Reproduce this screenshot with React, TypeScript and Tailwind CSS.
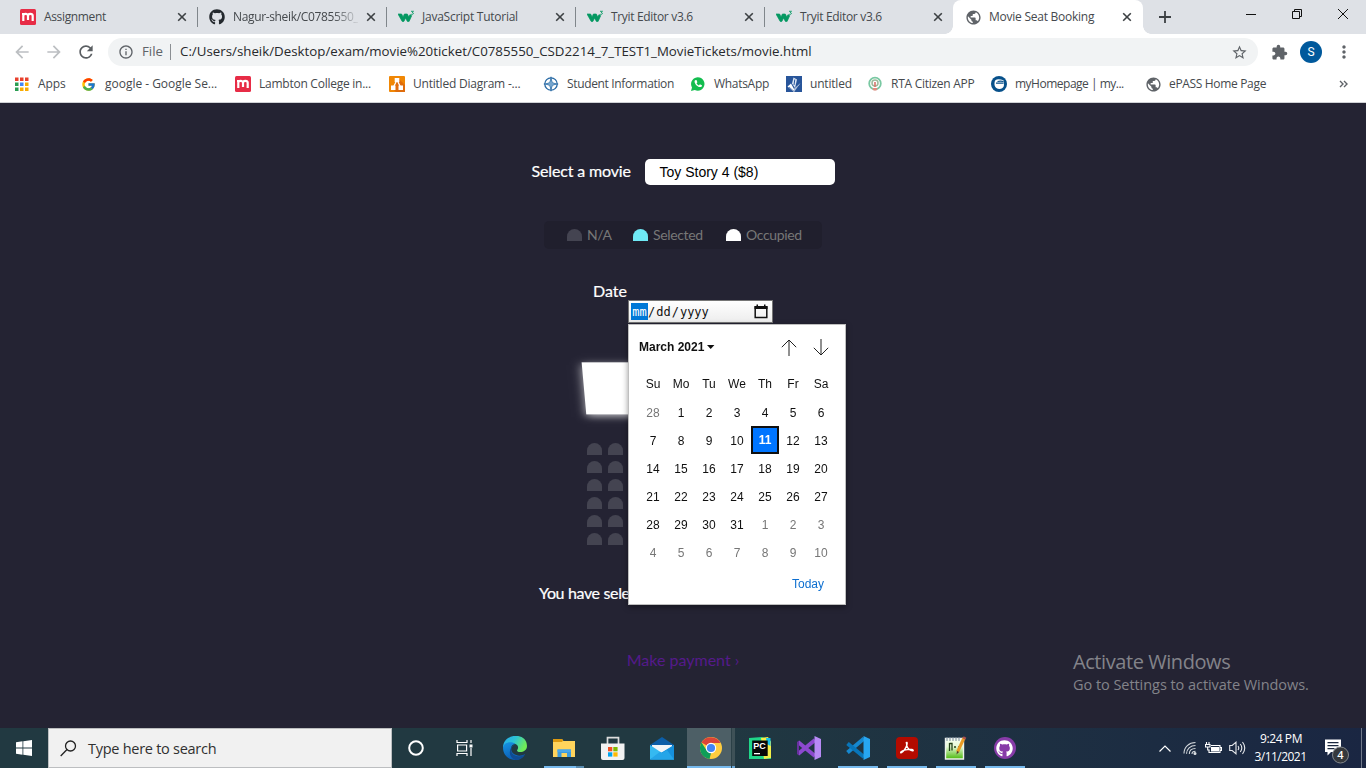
import React from "react";
import { FaGithub } from "react-icons/fa";
import { FcGoogle } from "react-icons/fc";
import { MdExtension, MdRefresh, MdPublic, MdStarBorder, MdArrowBack, MdArrowForward, MdMoreVert, MdInfoOutline } from "react-icons/md";

const ui = "font-['Open_Sans','Noto_Sans',sans-serif]";

function Moodle() {
  return (
    <svg width="16" height="16" viewBox="0 0 16 16" className="shrink-0">
      <rect width="16" height="16" rx="1.5" fill="#e72c46" />
      <path d="M3.3 12V6.5C3.3 4.6 8 4.2 8 6.700V11M8 6.700C8 4.300 12.700 4.300 12.700 6.700V12" fill="none" stroke="#fff" strokeWidth="2.200" />
      <path d="M2 4h5v2H2z" fill="#fff" />
    </svg>
  );
}

function W3() {
  return (
    <svg width="17" height="16" viewBox="0 0 17 16" className="shrink-0">
      <path d="M0 5h3.6l1.500 3L6.400 5h2.900l1.500 3L12 5.600l1.700 1.100-2.600 5.700H9.400L7.500 9l-1.600 3.400H4.200z" fill="#059862" stroke="#059862" strokeWidth=".7" />
      <path d="M13 2.300h2.500l-1.300 1.300c1.900 0 1.700 2.200-1 1.700" fill="none" stroke="#059862" strokeWidth=".9" />
    </svg>
  );
}

function Close() {
  return (
    <svg width="10" height="10" viewBox="0 0 10 10" className="shrink-0">
      <path d="M1.2 1.2l7.6 7.6M8.8 1.2L1.2 8.8" stroke="#3c4043" strokeWidth="1.6" />
    </svg>
  );
}

const tabs = [
  { icon: <Moodle />, title: "Assignment", cls: "tracking-[-0.35px]" },
  { icon: <FaGithub size={16} color="#24292e" className="shrink-0" />, title: "Nagur-sheik/C0785550_", cls: "tracking-[-0.35px] [mask-image:linear-gradient(to_right,#000_100px,transparent_128px)]" },
  { icon: <W3 />, title: "JavaScript Tutorial", cls: "tracking-[-0.25px]" },
  { icon: <W3 />, title: "Tryit Editor v3.6", cls: "tracking-[-0.33px]" },
  { icon: <W3 />, title: "Tryit Editor v3.6", cls: "tracking-[-0.33px]" },
];

function TabStrip() {
  return (
    <div className="flex h-[34px] bg-[#dee1e6] pl-2 text-[12px] text-[#45494d]">
      {tabs.map((t, i) => (
        <div key={i} className="flex w-[189px] shrink-0 items-center pl-3">
          <span className="flex w-6 shrink-0">{t.icon}</span>
          <span className={`w-[125px] whitespace-nowrap ${t.cls}`}>{t.title}</span>
          <span className="ml-2"><Close /></span>
          <span className={i < 4 ? "-mr-px ml-auto h-5 w-px bg-[#80868b]" : "hidden"} />
        </div>
      ))}
      <div className="relative flex w-[190px] shrink-0 items-center rounded-t-lg bg-white pl-3">
        <span className="absolute -left-2 bottom-0 h-2 w-2 bg-[radial-gradient(circle_at_0_0,transparent_7.5px,white_8px)]" />
        <span className="absolute -right-2 bottom-0 h-2 w-2 bg-[radial-gradient(circle_at_100%_0,transparent_7.5px,white_8px)]" />
        <span className="flex w-6 shrink-0"><MdPublic size={17} color="#5f6368" /></span>
        <span className="w-[125px] whitespace-nowrap tracking-[-0.25px]">Movie Seat Booking</span>
        <span className="ml-2"><Close /></span>
      </div>
      <div className="flex w-11 items-center justify-center">
        <svg width="12" height="12" viewBox="0 0 12 12"><path d="M6 0v12M0 6h12" stroke="#3c4043" strokeWidth="1.8" /></svg>
      </div>
      <div className="ml-auto flex h-[28px] items-center">
        <span className="flex w-[46px] justify-center"><svg width="10" height="10"><path d="M0 5.5h10" stroke="#111" /></svg></span>
        <span className="flex w-[46px] justify-center"><svg width="10" height="10"><path d="M.5 2.5h7v7h-7zM2.5 2.5v-2h7v7h-2" stroke="#111" fill="none" /></svg></span>
        <span className="flex w-[46px] justify-center"><svg width="10" height="10"><path d="M0 0l10 10M10 0L0 10" stroke="#111" /></svg></span>
      </div>
    </div>
  );
}

function Toolbar() {
  return (
    <div className="flex h-9 items-center bg-white pl-3">
      <MdArrowBack size={20} color="#bcbfc2" className="mr-3" />
      <MdArrowForward size={20} color="#bcbfc2" className="mr-3" />
      <MdRefresh size={20} color="#5a5e62" className="mr-3" />
      <div className="flex h-7 w-[1150px] items-center rounded-full bg-[#f1f3f4] pl-2.5 pr-2.5">
        <MdInfoOutline size={16} color="#5f6368" className="mr-2" />
        <span className="w-[28px] text-[13.3px] text-[#5f6368]">File</span>
        <span className="mr-[9px] h-4 w-px bg-[#8b8f93]" />
        <span className="whitespace-nowrap text-[13.3px] text-[#27292c]">C:/Users/sheik/Desktop/exam/movie%20ticket/C0785550_CSD2214_7_TEST1_MovieTickets/movie.html</span>
        <MdStarBorder size={17} color="#5f6368" className="ml-auto" />
      </div>
      <MdExtension size={17} color="#5f6368" className="ml-[13px]" />
      <span className="ml-[12px] flex h-[22px] w-[22px] items-center justify-center rounded-full bg-[#00599c] font-['Roboto',sans-serif] text-[12px] text-white">S</span>
      <MdMoreVert size={20} color="#5f6368" className="ml-[12px]" />
    </div>
  );
}

const appColors = ["#e8402c", "#e8402c", "#e8402c", "#2a9d52", "#4286f5", "#f9ab00", "#2a9d52", "#f9ab00", "#f9ab00"];

const bookmarks = [
  { w: "w-[67px]", t: "Apps", c: "tracking-[-0.1px]", icon: <svg width="15" height="14">{appColors.map((c, i) => <rect key={i} x={1 + (i % 3) * 5} y={0.5 + Math.floor(i / 3) * 5} width="3.500" height="3.500" fill={c} />)}</svg> },
  { w: "w-[154px]", t: "google - Google Se...", c: "tracking-[-0.02px]", icon: <FcGoogle size={15} /> },
  { w: "w-[154px]", t: "Lambton College in...", c: "tracking-[-0.25px]", icon: <Moodle /> },
  { w: "w-[154px]", t: "Untitled Diagram -...", c: "tracking-[-0.22px]", icon: <svg width="16" height="16" viewBox="0 0 16 16"><rect width="16" height="16" rx="1" fill="#f08705" /><path d="M10 3l6 6v7H7l-4-4z" fill="#df6c0c" /><path d="M8 4L4.5 11M8 4l3.5 7" stroke="#fff" strokeWidth="1.3" /><path d="M5.7 2h4.6v4H5.7zM2 9.5h4.5V14H2zM9.5 9.5H14V14H9.5z" fill="#fff" /></svg> },
  { w: "w-[147px]", t: "Student Information", c: "tracking-[-0.35px]", icon: <svg width="16" height="16" viewBox="0 0 16 16" fill="none"><circle cx="8" cy="8" r="6.2" stroke="#2769a4" strokeWidth="1.3" /><path d="M8 .8v14.4M.8 8h14.4" stroke="#2769a4" strokeWidth="1.1" /><path d="M8 3l1.5 3.5L13 8 9.5 9.5 8 13 6.5 9.5 3 8l3.5-1.5z" fill="#75a5ce" stroke="#2769a4" strokeWidth=".6" /></svg> },
  { w: "w-[96px]", t: "WhatsApp", c: "tracking-[-0.3px]", icon: <svg width="16" height="16" viewBox="0 0 16 16"><path d="M1 15l1-3.6A6.7 6.7 0 1 1 4.8 14z" fill="#13bd4f" /><path d="M5 4.2c-1.700 2 2 6.800 5 6.900 1.800 0 2.500-1.500 1.800-1.900L9.900 8.300 8.900 9.400C7.900 9.100 6.900 8.200 6.600 7.200l.8-1L6.500 4z" fill="#fff" /></svg> },
  { w: "w-[81px]", t: "untitled", c: "tracking-[-0.2px]", icon: <svg width="16" height="16" viewBox="0 0 16 16"><rect width="16" height="16" fill="#28559a" /><path d="M1.500 10.500L5 7.500l3 5.500 6.500-6-6.500 9z" fill="#fff" /><path d="M7.500 1.500l3.500 2L9 12 6 7.500z" fill="#dce6f4" /><path d="M8.800 3.500L8 9" stroke="#28559a" /><path d="M3 11l4.500 4L13 9.500" stroke="#28559a" fill="none" strokeWidth=".7" /></svg> },
  { w: "w-[124px]", t: "RTA Citizen APP", c: "tracking-[-0.27px]", icon: <svg width="16" height="16" viewBox="0 0 16 16" fill="none"><circle cx="8" cy="7.5" r="5.8" stroke="#79c8a2" strokeWidth="1.8" /><circle cx="8" cy="7" r="3" stroke="#9db99b" strokeWidth="1.5" /><path d="M8 6v5" stroke="#d9746b" strokeWidth="1.6" /><path d="M5.5 12h5l-1 2.5h-3z" fill="#e58a80" /></svg> },
  { w: "w-[154px]", t: "myHomepage | my...", c: "tracking-[-0.5px]", icon: <svg width="16" height="16" viewBox="0 0 16 16"><circle cx="8" cy="8" r="8" fill="#07508a" /><path d="M3.500 7C3.500 2.500 8 2.800 12.500 4.300L13 9c-.2 5-8.500 5.500-9.500 0z" fill="#fff" /><path d="M5 7.200h7.500M6.500 5.500q3-.8 6 0" stroke="#07508a" strokeWidth="1.200" fill="none" /></svg> },
  { w: "w-[150px]", t: "ePASS Home Page", c: "tracking-[-0.33px]", icon: <MdPublic size={17} color="#5f6368" /> },
];

function Bookmarks() {
  return (
    <div className="flex h-[33px] items-center border-b border-[#cfd1d5] bg-white pb-[4px] pl-[14px] text-[12px] text-[#45494d]">
      {bookmarks.map((b) => (
        <div key={b.t} className={`flex shrink-0 items-center ${b.w}`}>
          <span className="flex w-6 shrink-0">{b.icon}</span>
          <span className={`whitespace-nowrap ${b.c}`}>{b.t}</span>
        </div>
      ))}
      <svg width="9" height="8" viewBox="0 0 9 8" className="ml-auto mr-[18px]"><path d="M1 1l3 3-3 3M5 1l3 3-3 3" fill="none" stroke="#5f6368" strokeWidth="1.4" /></svg>
    </div>
  );
}

const weeks = [
  [28, 1, 2, 3, 4, 5, 6],
  [7, 8, 9, 10, 11, 12, 13],
  [14, 15, 16, 17, 18, 19, 20],
  [21, 22, 23, 24, 25, 26, 27],
  [28, 29, 30, 31, 1, 2, 3],
  [4, 5, 6, 7, 8, 9, 10],
];

function Calendar() {
  return (
    <div className="absolute left-[628px] top-[221px] flex h-[281px] w-[218px] flex-col border border-[#bfbfbf] bg-white px-[10px] font-['Liberation_Sans',Arial,sans-serif] text-[12px] text-[#101010] shadow-[0_2px_6px_rgba(0,0,0,0.4)]">
      <div className="flex h-[44px] items-center">
        <span className="font-bold">March 2021</span>
        <svg width="8" height="5" className="ml-[3px]"><path d="M0 0h7.4L3.7 4z" fill="#101010" /></svg>
        <svg width="16" height="17" viewBox="0 0 16 17" className="ml-auto mr-4 mt-px" fill="none" stroke="#222"><path d="M8 1v16M.8 8.2L8 1l7.2 7.2" /></svg>
        <svg width="16" height="17" viewBox="0 0 16 17" className="mr-[6px] mt-px" fill="none" stroke="#222"><path d="M8 0v16M.8 8.8L8 16l7.2-7.2" /></svg>
      </div>
      <div className="grid h-[29px] grid-cols-7">
        {["Su", "Mo", "Tu", "We", "Th", "Fr", "Sa"].map((d) => (
          <span key={d} className="flex items-center justify-center">{d}</span>
        ))}
      </div>
      <div className="grid grid-cols-7">
        {weeks.flatMap((w, r) =>
          w.map((d, c) => {
            const muted = (r === 0 && c === 0) || r === 5 || (r === 4 && c > 3);
            const today = r === 1 && c === 4;
            return (
              <span
                key={`${r}-${c}`}
                className={`flex h-7 items-center justify-center ${today ? "border-2 border-[#101010] bg-[#0075ff] font-bold text-white" : muted ? "pt-px text-[#767676]" : "pt-px"}`}
              >
                {d}
              </span>
            );
          }),
        )}
      </div>
      <div className="flex justify-end pr-[11px] pt-[9px] text-[#0d6fd0]">Today</div>
    </div>
  );
}

function Seat({ cls = "bg-[#444451]" }: { cls?: string }) {
  return <span className={`h-3 w-[15px] shrink-0 rounded-t-[10px] ${cls}`} />;
}

function Page() {
  return (
    <main className="relative flex h-[625px] flex-col items-center overflow-hidden bg-[#242333] font-['Lato',sans-serif] text-[16px] text-white">
      <div className="mt-[56px] flex h-[26px] w-[303px] items-center">
        <span className="w-[113px] whitespace-nowrap pb-[2px] tracking-[-0.15px] [-webkit-text-stroke:0.2px]">Select a movie</span>
        <span className="flex h-[26px] w-[190px] items-center rounded-[5px] bg-white pl-[15px] font-['Liberation_Sans',Arial,sans-serif] text-[14px] text-black">Toy Story 4 ($8)</span>
      </div>
      <div className="mt-9 flex h-7 w-[278px] items-center rounded-[5px] bg-[#201f2d] pl-[23px] text-[14px] tracking-[-0.35px] text-[#777]">
        <Seat /><span className="ml-[5px] w-[46px] pb-px">N/A</span>
        <Seat cls="bg-[#6feaf6]" /><span className="ml-[5px] w-[73px] pb-px">Selected</span>
        <Seat cls="bg-white" /><span className="ml-[5px] pb-px">Occupied</span>
      </div>
      <div className="mt-[30px] flex h-[44px] w-[180px] items-start">
        <span className="w-[35px] shrink-0 [-webkit-text-stroke:0.2px]">Date</span>
        <div className="mt-[21px] flex h-[23px] w-[145px] shrink-0 items-center border border-[#767676] bg-linear-to-b from-white to-[#ededed] pl-[2px] font-['DejaVu_Sans_Mono',monospace] text-[12px] text-[#111]">
          <span className="flex h-[17px] w-[17px] items-center justify-center bg-[#0078d7] text-white">mm</span>
          <span>/</span>
          <span className="ml-[1px]">dd</span>
          <span className="ml-[1px]">/</span>
          <span className="ml-[1px]">yyyy</span>
          <svg width="14" height="15" viewBox="0 0 14 15" className="ml-auto mr-[4px]"><path d="M1.200 3h11.600v10.500H1.200z" fill="none" stroke="#111" strokeWidth="1.5" /><path d="M.5 2h13v3H.5zM2.500 0.500h1.500v3H2.500zM10 0.500h1.500v3H10z" fill="#111" /></svg>
        </div>
      </div>
      <div className="mt-[31px] h-[70px] w-[198px] [perspective:1000px]">
        <div className="h-[70px] w-full bg-white shadow-[0_3px_10px_rgba(255,255,255,0.7)] [transform:rotateX(-42deg)]" />
      </div>
      <div className="mt-[19px] flex w-[192px] flex-col gap-[6px]">
        {[0, 1, 2, 3, 4, 5].map((r) => (
          <div key={r} className="flex gap-[6px]">
            {[0, 1, 2, 3, 4, 5, 6, 7].map((c) => <Seat key={c} />)}
          </div>
        ))}
      </div>
      <p className="mt-9 w-[288px] whitespace-nowrap tracking-[-0.35px] [-webkit-text-stroke:0.2px]">You have selected</p>
      <a className="mt-[43px] text-[#551a8b]">Make payment ›</a>
      <Calendar />
      <div className={`absolute left-[1073px] top-[545px] text-[#83838a] ${ui}`}>
        <div className="whitespace-nowrap text-[20px] leading-[28px] tracking-[-0.43px]">Activate Windows</div>
        <div className="whitespace-nowrap text-[14.5px] leading-[18px] tracking-[-0.05px]">Go to Settings to activate Windows.</div>
      </div>
    </main>
  );
}

const Edge = () => (
  <svg width="24" height="24" viewBox="0 0 24 24">
    <defs>
      <linearGradient id="eg" x1="0" y1="0" x2="1" y2=".4"><stop stopColor="#26a9ec" /><stop offset=".5" stopColor="#2cc3d5" /><stop offset="1" stopColor="#70ec57" /></linearGradient>
      <linearGradient id="eb" x1="0" y1="0" x2=".4" y2="1"><stop stopColor="#1795e3" /><stop offset="1" stopColor="#0a5cb4" /></linearGradient>
    </defs>
    <path d="M0 11C1-3.500 24-4 24 10c0 4-3.500 6-7 6-3 0-3.500-1.500-2.500-2.500C17 9 11 6.500 7 8c-3 1-6 3-7 3z" fill="url(#eg)" />
    <path d="M0 11.500C1 6 9 5 12.500 8 9 8 8 11 8 13c0 5 8 9 14 5-2 4-6 6-10 6C5 24 0 18.500 0 11.500z" fill="url(#eb)" />
    <path d="M12 8.500C7 11 7 18 13 20c4 1 7 0 9-2-2 4-5 6-9.500 6C5 22 5 11 12 8.500z" fill="#104b91" />
  </svg>
);

const Explorer = () => (
  <svg width="22" height="20" viewBox="0 0 22 20"><path d="M0 1h9l1.500 2H22v16H0z" fill="#ffd45c" /><path d="M0 1h9l1 1.500L9 4H0z" fill="#dd9a10" /><path d="M4.500 11.500h13.500V19h-4v-4H8.500v4h-4z" fill="#3d9be0" /><path d="M4.500 11.500h13.500V14H4.500z" fill="#4ba8ea" /></svg>
);

const Store = () => (
  <svg width="24" height="25" viewBox="0 0 24 25"><path d="M6.500 8V1.700h11V8" fill="none" stroke="#ddd" strokeWidth="1.700" /><path d="M0 7.500h23.500V22q0 2-2 2H2q-2 0-2-2z" fill="#f2f2f2" /><path d="M7 11h4.300v4.300H7z" fill="#f25022" /><path d="M12.300 11h4.300v4.300h-4.300z" fill="#7fba00" /><path d="M7 16.300h4.300v4.300H7z" fill="#00a4ef" /><path d="M12.300 16.300h4.300v4.300h-4.300z" fill="#ffb900" /></svg>
);

const Mail = () => (
  <svg width="24" height="23" viewBox="0 0 24 23"><path d="M0 8L12 0l12 8v5H0z" fill="#0c5ea8" /><path d="M2 8h20v8H2z" fill="#f1f5f8" /><path d="M0 8l12 8 12-8v14.500H0z" fill="#35b9f1" /><path d="M0 22.500L24 8v14.500z" fill="#1690dc" /><path d="M0 22.500l10-7.800 2 1.300 5-3 7 9.500z" fill="#25a5e8" /></svg>
);

const Chrome = () => (
  <svg width="22" height="22" viewBox="0 0 22 22"><circle cx="11" cy="11" r="11" fill="#ffcd40" /><path d="M11 11L1.500 5.500A11 11 0 0 1 20.600 6H11z" fill="#db4437" /><path d="M1.500 5.500L6.700 13.500 11 16 9.500 22A11 11 0 0 1 1.500 5.500z" fill="#0f9d58" /><circle cx="11" cy="11" r="5.200" fill="#fff" /><circle cx="11" cy="11" r="4.100" fill="#4285f4" /></svg>
);

const PyCharm = () => (
  <svg width="22" height="22" viewBox="0 0 22 22"><path d="M0 1l13-1 9 4v18H0z" fill="#20d789" /><path d="M12 1l7-1 3 5v16l-7 1z" fill="#f4ee48" /><path d="M17 1h4.500v8L18 7z" fill="#17c2e8" /><rect x="3.200" y="3.500" width="15.500" height="15.500" fill="#080808" /><text x="4.200" y="12" fill="#fff" fontSize="9" fontWeight="700" fontFamily="Liberation Sans">PC</text><path d="M5 16h6v1.300H5z" fill="#fff" /></svg>
);

const VS = () => (
  <svg width="24" height="24" viewBox="0 0 24 24"><path d="M1 6l17 14M1 18L18 4" stroke="#8c49cf" strokeWidth="4" /><path d="M0 6l2-1.500V19.500L0 18z" fill="#68309f" /><path d="M17.500 0L24 3v18l-6.500 3z" fill="#b88af5" /></svg>
);

const VSCode = () => (
  <svg width="24" height="24" viewBox="0 0 24 24"><path d="M1.500 16.500L18 2.500" stroke="#1688cf" strokeWidth="4" /><path d="M1.500 7.500L18 21" stroke="#0875b9" strokeWidth="4" /><path d="M17.500 0L24 3v18l-6.500 3z" fill="#27a6f1" /></svg>
);

const Acrobat = () => (
  <svg width="22" height="22" viewBox="0 0 22 22"><rect width="22" height="22" rx="4" fill="#b30b00" /><path d="M10.300 5.500c2-1 .3 4.500-2 7.500s-4.300 3.500-3.500 2c1.500-2 8-3 11-2.500 2.500.5 1.500 2-.8 1-3-1-4.500-4.500-4.700-8z" fill="none" stroke="#fff" strokeWidth="1.300" /></svg>
);

const Notepad = () => (
  <svg width="23" height="24" viewBox="0 0 23 24"><defs><linearGradient id="np" x2="0" y2="1"><stop stopColor="#f8fff4" /><stop offset=".4" stopColor="#e5f9d5" /><stop offset="1" stopColor="#4bb90c" /></linearGradient></defs><path d="M1.500 2.500h18v20.500h-18z" fill="url(#np)" stroke="#eef2ed" strokeWidth="1.400" /><path d="M3 1v4M6 1v4M9 1v4M12 1v4M15 1v4" stroke="#789" strokeWidth="1" /><path d="M5.500 7v8M5.500 7.500h2.500v7M10 11h2M14 11h2" fill="none" stroke="#224018" strokeWidth="1.300" /><path d="M20 2l-6.500 14" stroke="#e99b25" strokeWidth="3" /><path d="M20 3l1-2" stroke="#aa5050" strokeWidth="3" /><path d="M13 15l-.5 3.500 2.500-2.500z" fill="#4b3b2b" /></svg>
);

const GitHubApp = () => (
  <span className="flex h-[22px] w-[22px] items-center justify-center rounded-full bg-[#873ba8]"><FaGithub size={17} color="#fff" /></span>
);

const apps = [
  { name: "edge", icon: <Edge />, state: "" },
  { name: "explorer", icon: <Explorer />, state: "stack" },
  { name: "store", icon: <Store />, state: "" },
  { name: "mail", icon: <Mail />, state: "" },
  { name: "chrome", icon: <Chrome />, state: "active" },
  { name: "pycharm", icon: <PyCharm />, state: "" },
  { name: "vs", icon: <VS />, state: "" },
  { name: "code", icon: <VSCode />, state: "open" },
  { name: "acrobat", icon: <Acrobat />, state: "open" },
  { name: "notepad", icon: <Notepad />, state: "open" },
  { name: "github", icon: <GitHubApp />, state: "open" },
];

function Taskbar() {
  return (
    <div className="flex h-10 bg-linear-to-r from-[#213941] from-50% to-[#1a2642]">
      <div className="flex w-12 items-center justify-center">
        <svg width="16" height="16" viewBox="0 0 16 16"><path d="M0 2.200L6.500 1.300v6.200H0zM7.300 1.200L16 0v7.500H7.300zM0 8.500h6.500v6.200L0 13.800zM7.300 8.500H16V16l-8.700-1.200z" fill="#fff" /></svg>
      </div>
      <div className="flex w-[344px] items-center border border-[#bcbec0] bg-[#f1f1f1] pl-[11px]">
        <svg width="17" height="17" viewBox="0 0 17 17" fill="none" stroke="#222" strokeWidth="1.300"><circle cx="10.500" cy="6" r="5" /><path d="M7 9.500L.7 16" /></svg>
        <span className="ml-[11px] pt-[2px] text-[14.5px] tracking-[-0.27px] text-[#303030]">Type here to search</span>
      </div>
      <div className="flex w-12 items-center justify-center"><svg width="16" height="16"><circle cx="8" cy="8" r="6.800" stroke="#fff" strokeWidth="2" fill="none" /></svg></div>
      <div className="mr-[2px] flex w-12 items-center justify-center"><svg width="17" height="16" viewBox="0 0 17 16" fill="none" stroke="#fff" strokeWidth="1.200"><path d="M1 0v2.500h10V0M1.600 5h9v6h-9zM1 16v-2.500h10V16M15 0v3M15 8v8" /><path d="M13.500 4.500h3v3h-3z" fill="#fff" stroke="none" /></svg></div>
      {apps.map((a) => (
        <div key={a.name} className="flex w-[49px] shrink-0 flex-col items-center">
          {a.state === "active" ? (
            <div className="flex h-10 w-full pl-[1px]">
              <div className="flex w-[44px] flex-col items-center bg-[#4d5f66]"><div className="flex h-[38px] items-center pt-[2px] pl-[3px]">{a.icon}</div><div className="h-0.5 w-full bg-[#76b9ed]" /></div>
              <div className="flex w-[4px] flex-col border-l border-[#2b4047] bg-[#3e5157]"><div className="mt-auto h-0.5 bg-[#6aa5d4]" /></div>
            </div>
          ) : (
            <>
              <div className="flex h-[38px] items-center pt-[2px]">{a.icon}</div>
              {a.state === "open" && <div className="h-0.5 w-10 bg-[#76b9ed]" />}
              {a.state === "stack" && <div className="flex h-0.5 w-10"><div className="w-8 bg-[#76b9ed]" /><div className="w-2 bg-[#588baf]" /></div>}
            </>
          )}
        </div>
      ))}
      <div className="ml-auto flex items-center">
        <svg width="12" height="7" viewBox="0 0 12 7" className="mr-[12px]"><path d="M.5 6.500L6 1l5.500 5.500" fill="none" stroke="#fff" strokeWidth="1.200" /></svg>
        <svg width="14" height="14" viewBox="0 0 14 14" className="mr-[8px]" fill="none" stroke="#d3d8dc" strokeWidth="1.100"><path d="M1 12.500C1 6 6 1.500 12.500 1.500M3.500 12.800C3.500 8 7.500 4.500 12.500 4.500M6.300 13C6.300 9.500 9 7.500 12.500 7.500M9 13C9 11.500 10.500 10.300 12.500 10.300" /><circle cx="12" cy="12.500" r="1" fill="#fff" /></svg>
        <svg width="17" height="13" viewBox="0 0 17 13" className="mr-[7px]" fill="none" stroke="#fff" strokeWidth="1.100"><path d="M6 3.500h9v7H4V8M15.500 5.500h1v3h-1M1.500 0v2.500M4 0v2.500M.5 2.500H5V5H.5zM2.700 5v3h2" /><path d="M6 5h8v4.500H6z" fill="#fff" stroke="none" /></svg>
        <svg width="17" height="14" viewBox="0 0 17 14" className="mr-[9px]" fill="none" stroke="#e8eaed" strokeWidth="1.100"><path d="M.7 4.500h2.500L7 1.200v11.600L3.200 9.500H.7zM9 5q1.500 2 0 4M11.300 3q3 4 0 8M13.500 1q4.500 6 0 12" /></svg>
        <div className="w-[52px] whitespace-nowrap text-center text-[12px] leading-[18px] text-white"><div className="tracking-[-0.4px]">9:24 PM</div><div className="-ml-[1px] tracking-[-0.53px]">3/11/2021</div></div>
        <svg width="26" height="26" viewBox="0 0 26 26" className="ml-[17px] mr-[11px] mt-[6px]"><path d="M1 1.500h16V14H7l-3.500 3.500V14H1z" fill="#fff" /><path d="M3.500 4.700h11M3.500 7.700h11M3.500 10.700h7" stroke="#1b2840" strokeWidth="1.200" /><circle cx="16.500" cy="17" r="8" fill="#35383c" stroke="#82878c" /><text x="16.500" y="21" textAnchor="middle" fill="#fff" fontFamily="Open Sans" fontWeight="600" fontSize="11">4</text></svg>
        <div className="mr-1 h-10 w-px bg-[#70798a]" />
      </div>
    </div>
  );
}

export default function App() {
  return (
    <div className={`h-[768px] w-[1366px] overflow-hidden ${ui}`}>
      <TabStrip />
      <Toolbar />
      <Bookmarks />
      <Page />
      <Taskbar />
    </div>
  );
}
